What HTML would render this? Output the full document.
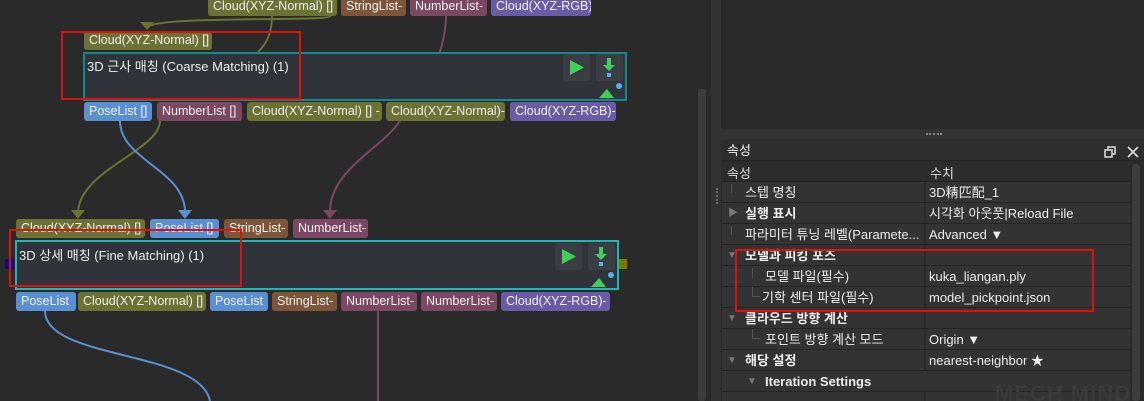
<!DOCTYPE html>
<html><head><meta charset="utf-8"><style>
*{margin:0;padding:0;box-sizing:border-box}
html,body{width:1144px;height:401px;overflow:hidden}
body{background:#2a2a2a;position:relative;font-family:"Liberation Sans","Noto Sans CJK KR",sans-serif;font-size:12.5px;color:#eee}
.a{position:absolute}
.p{position:absolute;height:19px;line-height:19px;border-radius:3px;padding-left:5px;white-space:nowrap;overflow:hidden;color:#f0f0f0;font-size:12.5px}
.o{background:#6b7233}.b{background:#5a8fd2}.br{background:#7d5538}.m{background:#7c4763}.pu{background:#6a5ba6}
.node{position:absolute;background:#30343a;border:2px solid #138a8a}
.rp{font-size:13px}
.row{position:absolute;left:722px;width:408px;height:21px;line-height:21px;border-bottom:1px solid #252525}
.row .l{position:absolute;left:0;width:202px;height:20px;background:#333}
.row .v{position:absolute;left:204px;width:204px;height:20px;background:#333;padding-left:3px;color:#eee}
.row .t{position:absolute;color:#eee;white-space:nowrap}
.bold{font-weight:bold}
.tri{position:absolute;color:#777;font-size:10px}
.tl{position:absolute;border-left:1px solid #555;border-bottom:1px solid #555}
</style></head><body>
<svg class="a" style="left:0;top:0" width="700" height="401">
<path d="M272 16 C272 40 260 50 258 52" stroke="#6b7233" stroke-width="2" fill="none"/>
<path d="M330 16 C330 22 150 15 147 28" stroke="#6b7233" stroke-width="2" fill="none"/>
<path d="M140 22 L154 22 L147 30Z" fill="#6b7233"/>
<path d="M446 16 C446 30 442 45 440 52" stroke="#7c4763" stroke-width="2" fill="none"/>
<path d="M160 121 C160 150 80 170 78 212" stroke="#6b7233" stroke-width="2" fill="none"/>
<path d="M71 210 L85 210 L78 219Z" fill="#6b7233"/>
<path d="M120 121 C120 160 185 170 185 212" stroke="#5a8fd2" stroke-width="2" fill="none"/>
<path d="M178 210 L192 210 L185 219Z" fill="#5a8fd2"/>
<path d="M400 121 C380 150 330 170 330 212" stroke="#7c4763" stroke-width="2" fill="none"/>
<path d="M323 210 L337 210 L330 219Z" fill="#7c4763"/>
<path d="M45 311 C45 360 200 350 210 401" stroke="#5a8fd2" stroke-width="2" fill="none"/>
<path d="M378 311 L378 401" stroke="#7c4763" stroke-width="2" fill="none"/>
</svg>
<div class="p o" style="left:208px;top:-3px;width:129px">Cloud(XYZ-Normal) []</div>
<div class="p br" style="left:341px;top:-3px;width:65px">StringList-</div>
<div class="p m" style="left:410px;top:-3px;width:77px">NumberList-</div>
<div class="p pu" style="left:491px;top:-3px;width:100px">Cloud(XYZ-RGB)</div>

<div class="p o" style="left:84px;top:31px;width:128px">Cloud(XYZ-Normal) []</div>
<div class="node" style="left:83px;top:52px;width:544px;height:49px">
<div class="a" style="left:2px;top:2px;font-size:13px">3D 근사 매칭 (Coarse Matching) (1)</div>
</div>
<div class="p b" style="left:84px;top:102px;width:68px">PoseList []</div>
<div class="p m" style="left:157px;top:102px;width:85px">NumberList []</div>
<div class="p o" style="left:247px;top:102px;width:135px">Cloud(XYZ-Normal) [] -</div>
<div class="p o" style="left:386px;top:102px;width:119px">Cloud(XYZ-Normal)-</div>
<div class="p pu" style="left:510px;top:102px;width:106px">Cloud(XYZ-RGB)-</div>

<div class="p o" style="left:16px;top:219px;width:129px">Cloud(XYZ-Normal) []</div>
<div class="p b" style="left:150px;top:219px;width:69px">PoseList []</div>
<div class="p br" style="left:224px;top:219px;width:64px">StringList-</div>
<div class="p m" style="left:293px;top:219px;width:75px">NumberList-</div>
<div class="a" style="left:5px;top:259px;width:9px;height:10px;background:#0a0a90"></div>
<div class="a" style="left:618px;top:259px;width:9px;height:10px;background:#7a7a00"></div>
<div class="node" style="left:15px;top:240px;width:604px;height:50px;border-color:#1bb8b8">
<div class="a" style="left:2px;top:3px;font-size:13px">3D 상세 매칭 (Fine Matching) (1)</div>
</div>
<div class="p b" style="left:16px;top:292px;width:60px">PoseList</div>
<div class="p o" style="left:78px;top:292px;width:128px">Cloud(XYZ-Normal) []</div>
<div class="p b" style="left:210px;top:292px;width:58px">PoseList</div>
<div class="p br" style="left:272px;top:292px;width:65px">StringList-</div>
<div class="p m" style="left:341px;top:292px;width:76px">NumberList-</div>
<div class="p m" style="left:421px;top:292px;width:76px">NumberList-</div>
<div class="p pu" style="left:501px;top:292px;width:109px">Cloud(XYZ-RGB)-</div>

<svg class="a" style="left:560px;top:52px" width="66" height="48">
<rect x="3" y="2" width="27" height="27" rx="3" fill="#3a3d42"/><path d="M10 8 L24 15.5 L10 23Z" fill="#3fcf5a"/>
<rect x="36" y="2" width="27" height="27" rx="3" fill="#3a3d42"/><path d="M47 6 h4 v7 h4 l-6 6 l-6 -6 h4z" fill="#3fcf5a"/><rect x="47" y="21" width="4" height="4" fill="#4fb0f0"/>
<path d="M39 46 L54 46 L47 37Z" fill="#3fcf5a"/><circle cx="59" cy="34" r="3" fill="#4fb0f0"/>
</svg>
<svg class="a" style="left:552px;top:240px" width="66" height="48">
<rect x="3" y="3" width="27" height="27" rx="3" fill="#3a3d42"/><path d="M10 9 L24 16.5 L10 24Z" fill="#3fcf5a"/>
<rect x="36" y="3" width="27" height="27" rx="3" fill="#3a3d42"/><path d="M47 7 h4 v7 h4 l-6 6 l-6 -6 h4z" fill="#3fcf5a"/><rect x="47" y="22" width="4" height="4" fill="#4fb0f0"/>
<path d="M39 47 L54 47 L47 38Z" fill="#3fcf5a"/><circle cx="59" cy="35" r="3" fill="#4fb0f0"/>
</svg>

<div class="a" style="left:61px;top:31px;width:240px;height:69px;border:2px solid #e01010"></div>
<div class="a" style="left:9px;top:229px;width:233px;height:58px;border:2px solid #e01010"></div>

<div class="a" style="left:698px;top:89px;width:8px;height:312px;background:#3c3c3c;border-radius:3px"></div>
<div class="a" style="left:711px;top:0;width:10px;height:401px;background:#333"></div>
<div class="a" style="left:721px;top:129px;width:423px;height:10px;background:#333"></div>
<div class="a" style="left:926px;top:133px;width:16px;height:2px;border-top:2px dotted #888"></div>
<div class="a rp" style="left:721px;top:139px;width:423px;height:22px;background:#2e2e2e;border-bottom:1px solid #222"><span class="a" style="left:6px;top:1px">속성</span>
<svg class="a" style="left:383px;top:6px" width="50" height="14"><rect x="1" y="5" width="7" height="7" fill="none" stroke="#ddd" stroke-width="1.5"/><path d="M4 5 V2 H11 V9 H8" fill="none" stroke="#ddd" stroke-width="1.5"/><path d="M24 2 L34 12 M34 2 L24 12" stroke="#ddd" stroke-width="1.6"/></svg></div>
<div class="a rp" style="left:722px;top:161px;width:408px;height:21px;background:#2c2c2c;border-bottom:1px solid #222"><span class="a" style="left:5px;top:2px;color:#ddd">속성</span><span class="a" style="left:208px;top:2px;color:#ddd">수치</span></div>
<div class="a" style="left:1132px;top:164px;width:8px;height:237px;background:#3c3c3c;border-radius:3px"></div>
<div class="a" style="left:716px;top:188px;width:3px;height:16px;border-left:2px dotted #666"></div>

<div class="row rp" style="top:182px"><div class="l"></div><div class="v">3D精匹配_1</div><div class="tl" style="left:9px;top:2px;width:8px;height:9px;border-bottom:none"></div><span class="t" style="left:23px">스텝 명칭</span></div>
<div class="row rp" style="top:203px"><div class="l"></div><div class="v">시각화 아웃풋|Reload File</div><span class="tri" style="left:6px;top:0">▶</span><span class="t bold" style="left:23px">실행 표시</span></div>
<div class="row rp" style="top:224px"><div class="l"></div><div class="v">Advanced ▼</div><div class="tl" style="left:9px;top:2px;width:8px;height:9px;border-bottom:none"></div><span class="t" style="left:23px">파라미터 튜닝 레벨(Paramete...</span></div>
<div class="row rp" style="top:245px"><div class="l"></div><div class="v"></div><span class="tri" style="left:5px;top:0">▼</span><span class="t bold" style="left:23px">모델과 피킹 포즈</span></div>
<div class="row rp" style="top:266px"><div class="l"></div><div class="v">kuka_liangan.ply</div><div class="tl" style="left:30px;top:2px;width:8px;height:10px;border-bottom:none"></div><span class="t" style="left:43px">모델 파일(필수)</span></div>
<div class="row rp" style="top:287px"><div class="l"></div><div class="v">model_pickpoint.json</div><div class="tl" style="left:30px;top:0;width:8px;height:10px"></div><span class="t" style="left:40px">기학 센터 파일(필수)</span></div>
<div class="row rp" style="top:308px"><div class="l"></div><div class="v"></div><span class="tri" style="left:5px;top:0">▼</span><span class="t bold" style="left:23px">클라우드 방향 계산</span></div>
<div class="row rp" style="top:329px"><div class="l"></div><div class="v">Origin ▼</div><div class="tl" style="left:30px;top:0;width:8px;height:10px"></div><span class="t" style="left:43px">포인트 방향 계산 모드</span></div>
<div class="row rp" style="top:350px"><div class="l"></div><div class="v">nearest-neighbor ★</div><span class="tri" style="left:5px;top:0">▼</span><span class="t bold" style="left:23px">해당 설정</span></div>
<div class="row rp" style="top:371px"><div class="l"></div><div class="v" style="left:202px;width:206px"></div><span class="tri" style="left:25px;top:0">▼</span><span class="t bold" style="left:43px">Iteration Settings</span></div>
<div class="row rp" style="top:392px"><div class="l"></div><div class="v"></div></div>
<div class="a" style="left:995px;top:381px;color:#3a3a3a;font-size:22px;font-weight:bold;letter-spacing:1px">MECH MIND</div>
<div class="a" style="left:735px;top:249px;width:359px;height:63px;border:2px solid #e01010"></div>
</body></html>
